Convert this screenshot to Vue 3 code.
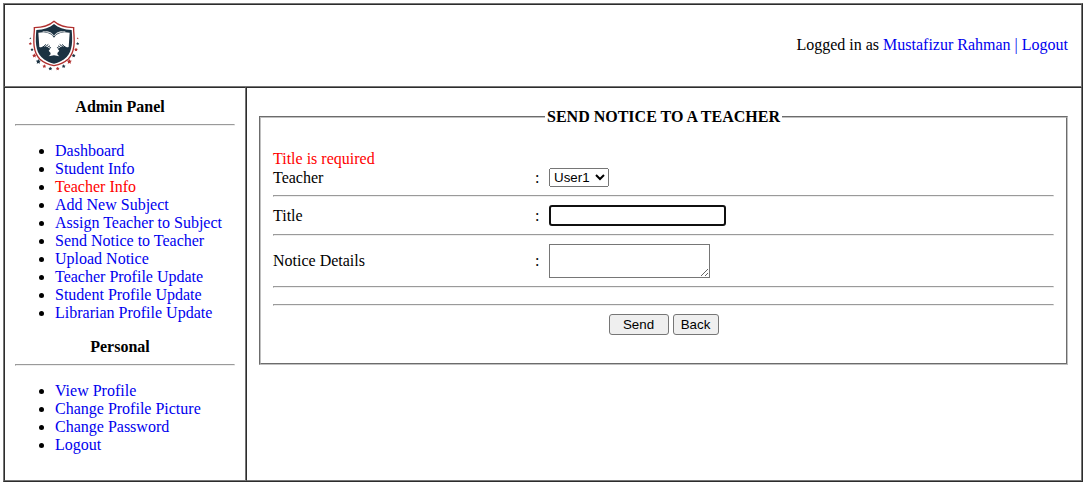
<script setup>
import { ref } from 'vue'

const adminLinks = [
  'Dashboard',
  'Student Info',
  'Teacher Info',
  'Add New Subject',
  'Assign Teacher to Subject',
  'Send Notice to Teacher',
  'Upload Notice',
  'Teacher Profile Update',
  'Student Profile Update',
  'Librarian Profile Update',
]
const personalLinks = ['View Profile', 'Change Profile Picture', 'Change Password', 'Logout']
const active = 'Teacher Info'

const teacher = ref('User1')
const title = ref('')
const details = ref('')

// Stars around the shield: x, y, radius, colour class
const stars = [
  [31, 85, 3, 'navy'], [31, 101, 5, 'red'], [36, 119, 5, 'navy'], [43, 137, 7, 'red'],
  [55, 155, 8, 'navy'], [73, 169, 6, 'red'], [91, 176, 6, 'navy'],
  [173, 85, 3, 'red'], [173, 101, 5, 'navy'], [168, 119, 6, 'red'], [161, 137, 6, 'navy'],
  [148, 155, 8, 'red'], [131, 169, 6, 'navy'], [113, 176, 6, 'red'],
]
function starPoints([cx, cy, r]) {
  return Array.from({ length: 10 }, (_, i) => {
    const angle = (Math.PI * i) / 5 - Math.PI / 2
    const d = i % 2 ? r * 0.5 : r
    return `${(cx + d * Math.cos(angle)).toFixed(1)},${(cy + d * Math.sin(angle)).toFixed(1)}`
  }).join(' ')
}
</script>

<template>
  <div class="frame">
    <header class="cell header">
      <a href="#" aria-label="Home" class="home">
        <svg class="logo" viewBox="21 24 162 162" aria-hidden="true">
          <path class="shield-edge" d="M102 34C88 47 69 53 43 53V62C40 94 39 126 59 147C72 159 87 164 102 167C117 164 132 159 145 147C165 126 164 94 161 62V53C135 53 116 47 102 34Z" />
          <path class="navy" d="M102 42C89 53 72 59 49 60C46 93 46 122 64 141C75 152 88 158 102 161C116 158 129 152 140 141C158 122 158 93 155 60C132 59 115 53 102 42Z" />
          <path class="white" d="M55 68L70 67Q92 68 102 83Q112 68 134 67L149 68L146 111L118 122Q110 128 113 134L118 139L102 136L86 139L91 134Q94 128 86 122L58 111Z" />
          <path class="page-edge" d="M68 65Q91 63 101 78M79 65Q95 66 101 76M136 65Q113 63 103 78M125 65Q109 66 103 76" />
          <path class="navy" d="M59 114L70 109L82 112L90 118L85 124L77 127L66 126ZM145 114L134 109L122 112L114 118L119 124L127 127L138 126Z" />
          <path class="finger" d="M68 112L77 104M73 113L84 104M78 115L89 108M82 117L92 113M136 112L127 104M131 113L120 104M126 115L115 108M122 117L112 113" />
          <polygon v-for="(star, i) in stars" :key="i" :class="star[3]" :points="starPoints(star)" />
        </svg>
      </a>
      <div>Logged in as <a href="#">Mustafizur Rahman</a> <a href="#">| Logout</a></div>
    </header>

    <div class="body">
      <nav class="cell sidebar">
        <h2>Admin Panel</h2>
        <hr />
        <ul>
          <li v-for="link in adminLinks" :key="link">
            <a href="#" :class="{ active: link === active }">{{ link }}</a>
          </li>
        </ul>
        <h2>Personal</h2>
        <hr />
        <ul>
          <li v-for="link in personalLinks" :key="link"><a href="#">{{ link }}</a></li>
        </ul>
      </nav>

      <main class="cell main">
        <form @submit.prevent>
          <fieldset>
            <legend>SEND NOTICE TO A TEACHER</legend>
            <div class="error">Title is required</div>
            <div class="row">
              <label for="teacher">Teacher</label>
              <span>:</span>
              <select id="teacher" v-model="teacher">
                <option>User1</option>
              </select>
            </div>
            <hr />
            <div class="row">
              <label for="title">Title</label>
              <span>:</span>
              <input id="title" v-model="title" class="title" type="text" />
            </div>
            <hr />
            <div class="row">
              <label for="details">Notice Details</label>
              <span>:</span>
              <textarea id="details" v-model="details"></textarea>
            </div>
            <hr />
            <hr />
            <div class="actions">
              <button type="submit" class="send">Send</button>
              <button type="button" class="back">Back</button>
            </div>
          </fieldset>
        </form>
      </main>
    </div>
  </div>
</template>

<style>
body {
  margin: 0;
  background: #fff;
}
</style>

<style scoped>
.frame {
  margin: 3px;
  border: 1px solid;
  border-color: #767676 #2c2c2c #2c2c2c #767676;
  font: 16px/18px "Liberation Serif", "Times New Roman", serif;
  color: #000;
}
.cell {
  box-sizing: border-box;
  border: 1px solid;
  border-color: #2c2c2c #767676 #767676 #2c2c2c;
}
.header {
  display: flex;
  align-items: center;
  justify-content: space-between;
  padding: 13px 13px 14px 22px;
}
.home,
.logo {
  display: block;
}
.logo {
  width: 54px;
  height: 54px;
}
.navy {
  fill: #1b3242;
}
.red {
  fill: #b0302f;
}
.white {
  fill: #fff;
}
.shield-edge {
  fill: #fff;
  stroke: #b0302f;
  stroke-width: 4;
}
.page-edge {
  fill: none;
  stroke: #fff;
  stroke-width: 2;
}
.finger {
  stroke: #1b3242;
  stroke-width: 3;
  stroke-linecap: round;
}
.body {
  display: grid;
  grid-template-columns: 242px 1fr;
}
.sidebar {
  padding: 10px;
}
a {
  color: #0000ee;
  text-decoration: none;
}
a.active {
  color: #ff0000;
}
h2 {
  margin: 0;
  padding-right: 10px;
  font-size: 16px;
  font-weight: bold;
  text-align: center;
}
hr {
  margin: 8px 0;
  border: 1px solid;
  border-color: #9a9a9a #eeeeee #eeeeee #9a9a9a;
}
ul {
  margin: 16px 0;
  padding-left: 40px;
}
.main {
  padding: 20px 13px 20px 12px;
}
fieldset {
  min-width: 0;
  margin: 0;
  padding: 24px 12px 28px;
  border: 2px groove #c0c0c0;
}
legend {
  margin: 0 auto;
  padding: 0 2px;
  font-weight: bold;
}
.error {
  color: #ff0000;
}
.row {
  display: grid;
  grid-template-columns: 262px 14px 1fr;
  align-items: center;
  justify-items: start;
}
fieldset hr + hr {
  margin-top: 16px;
}
select,
input,
textarea,
button {
  box-sizing: border-box;
  margin: 0;
  font-family: "Liberation Sans", Arial, sans-serif;
}
select {
  width: 60px;
  height: 19px;
}
.title {
  width: 177px;
  height: 21px;
  border: 2px solid #101010;
  border-radius: 3px;
}
textarea {
  display: block;
  width: 161px;
  height: 34px;
  border: 1px solid #767676;
}
.actions {
  display: flex;
  justify-content: center;
  gap: 4px;
}
button {
  height: 21px;
  padding: 1px 6px;
  border: 1px solid #767676;
  border-radius: 3px;
  background: #efefef;
  color: #000;
}
.send {
  width: 60px;
}
.back {
  width: 46px;
}
</style>
